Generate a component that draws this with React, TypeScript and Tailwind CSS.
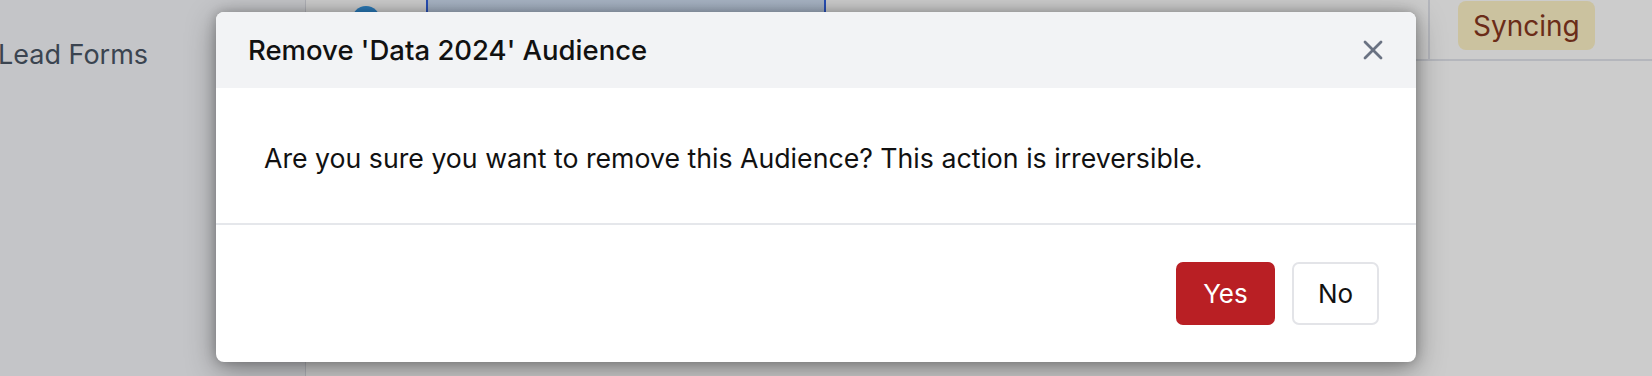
import React from "react";
import { X } from "lucide-react";

export default function App() {
  return (
    <div
      className="relative w-[1652px] h-[376px] overflow-hidden bg-white"
      style={{ fontFamily: "Inter, 'Noto Sans', sans-serif" }}
    >
      {/* Page behind the dialog */}
      <div className="flex h-full">
        <aside className="w-[306px] shrink-0 h-full bg-[#f6f7fb] border-r border-[#dcdee5]">
          <div className="pt-[35px] -ml-[2px] text-[27px] leading-[40px] text-gray-600">Lead Forms</div>
        </aside>
        <main className="flex-1 h-full">
          <div className="flex h-[61px] border-b-2 border-[#e2e4eb]">
            <div className="w-[120px] shrink-0 pl-[46px] pt-[6px]">
              <div className="w-7 h-7 rounded-full bg-[#3599e6]" />
            </div>
            <div className="w-[400px] shrink-0 h-[44px] border-x-2 border-[#3463e2] bg-gradient-to-b from-[#d3e2f6] to-[#bdcee6]" />
            <div className="flex-1" />
            <div className="w-[224px] shrink-0 border-l-2 border-[#e2e4eb] pl-[28px] pt-[1px]">
              <span className="inline-flex h-[49px] items-center rounded-lg bg-[#fef3c7] px-[15px] text-[28px] text-[#86381f]">
                Syncing
              </span>
            </div>
          </div>
        </main>
      </div>

      {/* Overlay + dialog */}
      <div className="absolute inset-0 bg-black/20 pl-[216px] pt-[12px]">
        <div className="w-[1200px] h-[350px] flex flex-col overflow-hidden rounded-lg bg-white shadow-[0_8px_30px_rgba(0,0,0,0.35),0_0_12px_rgba(0,0,0,0.25)]">
          <div className="h-[76px] shrink-0 flex items-center justify-between bg-[#f2f3f5] pl-[32px] pr-[27px]">
            <h2 className="pt-[2px] text-[27.5px] font-medium text-[#111]">Remove 'Data 2024' Audience</h2>
            <button className="flex items-center justify-center text-gray-500">
              <X size={32} strokeWidth={2.1} />
            </button>
          </div>
          <div className="h-[137px] shrink-0 flex items-center border-b-2 border-[#e5e7eb] px-[48px] pt-[6px]">
            <p className="text-[26.7px] text-[#111]">
              Are you sure you want to remove this Audience? This action is irreversible.
            </p>
          </div>
          <div className="flex-1 flex items-center justify-end gap-[17px] pr-[37px]">
            <button className="w-[99px] h-[63px] rounded-[7px] bg-[#b91f24] text-[26px] text-white">Yes</button>
            <button className="w-[87px] h-[63px] rounded-[7px] border-2 border-[#e3e4e8] bg-white text-[26px] text-[#111]">
              No
            </button>
          </div>
        </div>
      </div>
    </div>
  );
}
